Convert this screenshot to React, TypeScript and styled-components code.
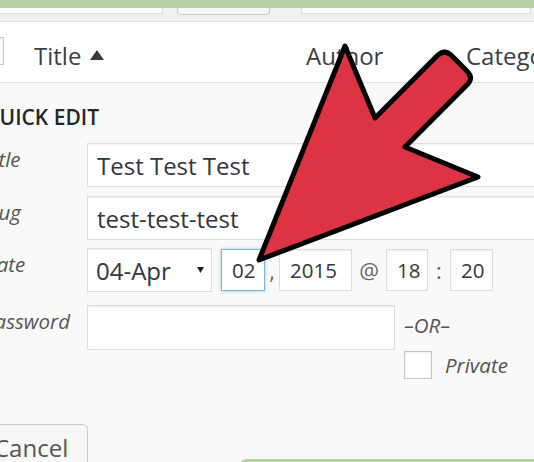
import React from "react";
import styled, { createGlobalStyle } from "styled-components";

const GlobalStyle = createGlobalStyle`
  *, *::before, *::after { box-sizing: border-box; }
  html, body { margin: 0; padding: 0; background: #f9f9f9; }
  body { font-family: "Open Sans", "Liberation Sans", sans-serif; color: #32373c; }
`;

const Screen = styled.div`
  position: relative;
  width: 534px;
  height: 462px;
  overflow: hidden;
  display: flex;
  flex-direction: column;
  background: #f9f9f9;
`;

const GreenStrip = styled.div`
  flex: none;
  height: 8px;
  background: #b8d3a3;
`;

const Toolbar = styled.div`
  flex: none;
  height: 14px;
  display: flex;
  align-items: flex-start;
  background: #f1f1f1;
  border-bottom: 1px solid #e2e2e2;
`;

const ToolField = styled.div<{ $left: number; $width: number }>`
  flex: none;
  margin-left: ${(p) => p.$left}px;
  width: ${(p) => p.$width}px;
  height: 6px;
  background: #fff;
  border: 1px solid #ddd;
  border-top: none;
`;

const ToolButton = styled.div<{ $left: number; $width: number }>`
  flex: none;
  margin-left: ${(p) => p.$left}px;
  width: ${(p) => p.$width}px;
  height: 7px;
  background: #f7f7f7;
  border: 1px solid #ccc;
  border-top: none;
  border-radius: 0 0 4px 4px;
`;

const HeaderRow = styled.div`
  flex: none;
  height: 61px;
  display: flex;
  align-items: flex-start;
  padding-top: 17px;
  background: #fff;
  border-bottom: 1px solid #e1e1e1;
`;

const Checkbox = styled.div<{ $left?: number; $top?: number }>`
  flex: none;
  width: 28px;
  height: 28px;
  margin-left: ${(p) => p.$left ?? 0}px;
  margin-top: ${(p) => p.$top ?? 0}px;
  background: #fff;
  border: 1px solid #c3c6c9;
  box-shadow: inset 0 1px 2px rgba(0, 0, 0, 0.08);
`;

const HeaderCell = styled.div<{ $left?: number; $width?: number }>`
  flex: none;
  display: flex;
  align-items: flex-start;
  gap: 9px;
  margin-left: ${(p) => p.$left ?? 0}px;
  width: ${(p) => (p.$width ? `${p.$width}px` : "auto")};
  font-size: 24px;
  line-height: 33px;
  color: #3a3f44;
  white-space: nowrap;
`;

const SortIcon = styled.svg`
  flex: none;
  margin-top: 11px;
`;

const QuickEdit = styled.div`
  flex: 1;
  display: flex;
  flex-direction: column;
  margin-left: -17px;
  padding-top: 20px;
`;

const Heading = styled.h2`
  margin: 0 0 12px;
  font-size: 21px;
  font-weight: 600;
  line-height: 28px;
  color: #23282d;
  white-space: nowrap;
`;

const FormRow = styled.div<{ $gap: number }>`
  display: flex;
  align-items: flex-start;
  margin-bottom: ${(p) => p.$gap}px;
`;

const FieldLabel = styled.span`
  flex: none;
  width: 104px;
  padding-top: 3px;
  font-size: 20.5px;
  font-style: italic;
  line-height: 27px;
  color: #555;
  white-space: nowrap;
`;

const TextField = styled.input<{ $width: number; $height?: number }>`
  flex: none;
  width: ${(p) => p.$width}px;
  height: ${(p) => p.$height ?? 44}px;
  margin: 0;
  padding: 0 9px;
  font-family: "Open Sans", "Liberation Sans", sans-serif;
  font-size: 24px;
  color: #32373c;
  background: #fff;
  border: 1px solid #ddd;
  border-radius: 0;
  box-shadow: inset 0 1px 2px rgba(0, 0, 0, 0.07);
  outline: none;
`;

const DateGroup = styled.div`
  display: flex;
  align-items: center;
  height: 44px;
`;

const SelectBox = styled.div`
  flex: none;
  width: 125px;
  height: 44px;
  margin-right: 9px;
  display: flex;
  align-items: center;
  justify-content: space-between;
  padding: 0 7px 0 8px;
  font-size: 24px;
  color: #32373c;
  background: #fff;
  border: 1px solid #ddd;
  box-shadow: inset 0 1px 2px rgba(0, 0, 0, 0.07);
`;

const DateInput = styled.input<{ $width: number; $focused?: boolean }>`
  flex: none;
  width: ${(p) => p.$width}px;
  height: 42px;
  margin: 0;
  padding: 0 0 0 10px;
  font-family: "Open Sans", "Liberation Sans", sans-serif;
  font-size: 20.5px;
  color: #32373c;
  background: #fff;
  border: 1px solid ${(p) => (p.$focused ? "#7fb1dd" : "#ddd")};
  border-radius: 0;
  box-shadow: ${(p) =>
    p.$focused
      ? "0 0 3px rgba(30, 140, 190, 0.45)"
      : "inset 0 1px 2px rgba(0, 0, 0, 0.07)"};
  outline: none;
`;

const Sep = styled.span<{ $width: number }>`
  flex: none;
  width: ${(p) => p.$width}px;
  text-align: center;
  font-size: 22px;
  color: #666;
`;

const OrColumn = styled.div`
  flex: none;
  display: flex;
  flex-direction: column;
  margin-left: 9px;
  padding-top: 7px;
`;

const ItalicText = styled.span`
  font-size: 20.5px;
  font-style: italic;
  line-height: 27px;
  color: #555;
  white-space: nowrap;
`;

const PrivateRow = styled.label`
  display: flex;
  align-items: center;
  gap: 13px;
  margin-top: 12px;
`;

const Footer = styled.div`
  display: flex;
  align-items: flex-start;
`;

const CancelButton = styled.button`
  flex: none;
  margin: 0 0 0 -7px;
  width: 112px;
  height: 48px;
  padding: 0 17px;
  text-align: left;
  font-family: "Open Sans", "Liberation Sans", sans-serif;
  font-size: 24px;
  line-height: 46px;
  color: #555;
  background: #f7f7f7;
  border: 1px solid #ccc;
  border-radius: 5px;
  box-shadow: 0 1px 0 #ccc;
`;

const GreenBar = styled.div`
  flex: 1;
  margin-left: 152px;
  margin-top: 35px;
  height: 14px;
  background: #b8d3a3;
  border-top-left-radius: 6px;
`;

const ArrowLayer = styled.svg`
  position: absolute;
  left: 0;
  top: 0;
  pointer-events: none;
`;

export default function App() {
  return (
    <>
      <GlobalStyle />
      <Screen>
        <GreenStrip />
        <Toolbar>
          <ToolField $left={-2} $width={165} />
          <ToolButton $left={14} $width={93} />
          <ToolField $left={31} $width={230} />
        </Toolbar>
        <HeaderRow>
          <Checkbox $left={-24} $top={-2} />
          <HeaderCell $left={30} $width={272}>
            <span>Title</span>
            <SortIcon width="14" height="10" viewBox="0 0 14 10">
              <polygon points="7,0 14,10 0,10" fill="#3c3c3c" />
            </SortIcon>
          </HeaderCell>
          <HeaderCell $width={160}>Author</HeaderCell>
          <HeaderCell>Categories</HeaderCell>
        </HeaderRow>
        <QuickEdit>
          <Heading>QUICK EDIT</Heading>
          <FormRow $gap={9}>
            <FieldLabel>Title</FieldLabel>
            <TextField $width={480} readOnly value="Test Test Test" />
          </FormRow>
          <FormRow $gap={8}>
            <FieldLabel>Slug</FieldLabel>
            <TextField $width={480} readOnly value="test-test-test" />
          </FormRow>
          <FormRow $gap={13}>
            <FieldLabel>Date</FieldLabel>
            <DateGroup>
              <SelectBox>
                <span>04-Apr</span>
                <svg width="7" height="6" viewBox="0 0 7 6">
                  <polygon points="0,0 7,0 3.5,6" fill="#222" />
                </svg>
              </SelectBox>
              <DateInput $width={44} $focused readOnly value="02" />
              <Sep $width={14}>,</Sep>
              <DateInput $width={73} readOnly value="2015" />
              <Sep $width={34}>@</Sep>
              <DateInput $width={42} readOnly value="18" />
              <Sep $width={22}>:</Sep>
              <DateInput $width={43} readOnly value="20" />
            </DateGroup>
          </FormRow>
          <FormRow $gap={45}>
            <FieldLabel>Password</FieldLabel>
            <TextField $width={308} $height={45} readOnly value="" />
            <OrColumn>
              <ItalicText>–OR–</ItalicText>
              <PrivateRow>
                <Checkbox />
                <ItalicText>Private</ItalicText>
              </PrivateRow>
            </OrColumn>
          </FormRow>
          <Footer>
            <CancelButton type="button">Cancel</CancelButton>
            <GreenBar />
          </Footer>
        </QuickEdit>
        <ArrowLayer width="534" height="462" viewBox="0 0 534 462">
          <path
            d="M259,260 L345,46 L375,118 L437.4,55.6 Q444.5,48.5 451.6,55.6 L466.9,70.9 Q474,78 466.9,85.1 L405,147 L478,177 Z"
            fill="#dd3444"
            stroke="#000"
            strokeWidth="5"
            strokeLinejoin="round"
          />
        </ArrowLayer>
      </Screen>
    </>
  );
}
